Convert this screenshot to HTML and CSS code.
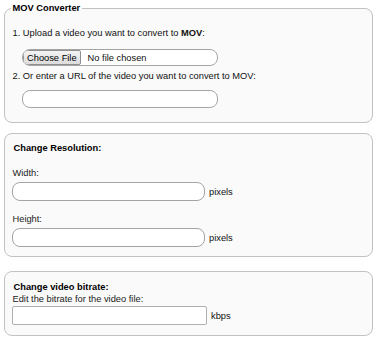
FILE: index.html
```html
<!DOCTYPE html>
<html lang="en">
<head>
<meta charset="utf-8">
<title>MOV Converter</title>
<link rel="stylesheet" href="styles.css">
</head>
<body>
<div class="page">
  <fieldset class="panel panel-convert">
    <legend class="panel-legend">MOV Converter</legend>
    <p class="line">1. Upload a video you want to convert to <b>MOV</b>:</p>
    <label class="file-field">
      <span class="file-btn">Choose File</span>
      <span class="file-name">No file chosen</span>
    </label>
    <p class="line line-url">2. Or enter a URL of the video you want to convert to MOV:</p>
    <input class="text-input url-input" type="text">
  </fieldset>

  <div class="panel panel-res">
    <p class="heading">Change Resolution:</p>
    <p class="label label-first">Width:</p>
    <div class="field-row">
      <input class="text-input size-input" type="text">
      <span class="unit">pixels</span>
    </div>
    <p class="label label-next">Height:</p>
    <div class="field-row">
      <input class="text-input size-input" type="text">
      <span class="unit">pixels</span>
    </div>
  </div>

  <div class="panel panel-bitrate">
    <p class="heading">Change video bitrate:</p>
    <p class="label">Edit the bitrate for the video file:</p>
    <div class="field-row field-row-bitrate">
      <input class="text-input bitrate-input" type="text">
      <span class="unit">kbps</span>
    </div>
  </div>
</div>
</body>
</html>
```

FILE: styles.css
```css
* {
  box-sizing: border-box;
}

body {
  margin: 0;
  background: #ffffff;
  color: #111111;
  font-family: "Liberation Sans", Arial, sans-serif;
  font-size: 9.3px;
  line-height: 12px;
}

.page {
  display: flex;
  flex-direction: column;
  padding: 2px 0 0 4px;
}

.panel {
  width: 369px;
  margin: 0;
  border: 1px solid #c2c2c2;
  border-radius: 8px;
  background: #fafafa;
  min-width: 0;
}

.panel-convert {
  padding: 13px 8px 14px 7.5px;
}

.panel-legend {
  margin-left: -1.5px;
  padding: 0 1.5px;
  font-weight: bold;
  line-height: 12px;
  color: #000000;
}

.line {
  margin: 0;
}

.line-url {
  margin-top: 4px;
}

.file-field {
  display: flex;
  align-items: center;
  width: 196px;
  height: 17px;
  margin: 10px 0 0 9.5px;
  border: 1px solid #a4a4a4;
  border-radius: 8px;
  background: #ffffff;
  overflow: hidden;
}

.file-btn {
  display: flex;
  align-items: center;
  height: 15px;
  padding: 0 3px;
  border: 1px solid #8f8f8f;
  border-radius: 2px;
  background: linear-gradient(#f4f4f4, #dcdcdc);
  color: #000000;
}

.file-name {
  margin-left: 7px;
  color: #111111;
}

.text-input {
  display: block;
  margin: 0;
  padding: 0 6px;
  border: 1px solid #a4a4a4;
  border-radius: 8px;
  background: #ffffff;
  font: inherit;
}

.url-input {
  width: 196px;
  height: 18px;
  margin: 8px 0 0 9.5px;
}

.panel-res {
  margin-top: 10px;
  padding: 8px 8px 9px 7px;
}

.panel-bitrate {
  margin-top: 14px;
  padding: 9px 8px 10px 7px;
}

.heading {
  margin: 0;
  padding-left: 1.5px;
  font-weight: bold;
  color: #000000;
}

.label {
  margin: 0;
  padding-left: 0.5px;
  color: #222222;
}

.label-first {
  margin-top: 13px;
}

.label-next {
  margin-top: 12px;
}

.field-row {
  display: flex;
  align-items: center;
  gap: 4px;
  margin-top: 3px;
}

.field-row-bitrate {
  margin-top: 1px;
}

.size-input {
  width: 193px;
  height: 19px;
}

.bitrate-input {
  width: 195px;
  height: 19px;
  border-color: #b0b0b0;
  border-radius: 2px;
}

.unit {
  color: #111111;
}
```
